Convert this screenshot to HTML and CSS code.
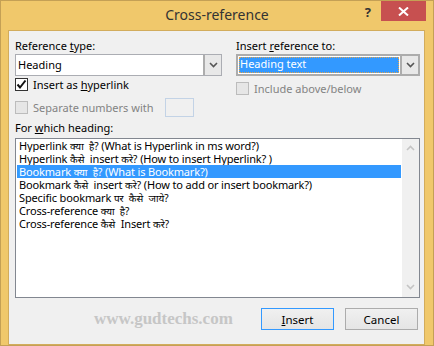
FILE: index.html
```html
<!DOCTYPE html>
<html lang="en">
<head>
    <meta charset="UTF-8">
    <title>Cross-reference</title>
    <link rel="stylesheet" href="styles.css">
</head>
<body>

    <div class="window">
        <div class="titlebar">
            <span></span>
            <span class="title">Cross-reference</span>
            <div class="controls">
                <span class="help">?</span>
                <span class="close">
                    <svg width="11" height="9" viewBox="0 0 11 9"><path d="M1 0.5 L10 8.5 M10 0.5 L1 8.5" stroke="#fff" stroke-width="2"/></svg>
                </span>
            </div>
        </div>

        <div class="client">
            <div class="top">
                <div class="col">
                    <div class="label">Reference <u>t</u>ype:</div>
                    <div class="combo">
                        <span class="value">Heading</span>
                        <span class="drop"><svg width="9" height="6" viewBox="0 0 9 6"><path d="M1 1 L4.5 4.5 L8 1" fill="none" stroke="#555" stroke-width="1.6"/></svg></span>
                    </div>
                    <div class="check">
                        <span class="box"><svg width="11" height="11" viewBox="0 0 11 11"><path d="M1.5 5.5 L4 8.5 L9.5 1.5" fill="none" stroke="#111" stroke-width="2"/></svg></span>
                        <span>Insert as <u>h</u>yperlink</span>
                    </div>
                    <div class="check disabled sep">
                        <span class="box"></span>
                        <span>Separate numbers with</span>
                        <span class="sep-box"></span>
                    </div>
                </div>
                <div class="col">
                    <div class="label">Insert <u>r</u>eference to:</div>
                    <div class="combo focused">
                        <span class="value">Heading text</span>
                        <span class="drop"><svg width="9" height="6" viewBox="0 0 9 6"><path d="M1 1 L4.5 4.5 L8 1" fill="none" stroke="#555" stroke-width="1.6"/></svg></span>
                    </div>
                    <div class="check disabled include">
                        <span class="box"></span>
                        <span>Include above/below</span>
                    </div>
                </div>
            </div>

            <div class="label">For <u>w</u>hich heading:</div>
            <div class="list">
                <ul>
                    <li>Hyperlink <span class="hi">क्या  है?</span> (What is Hyperlink in ms word?)</li>
                    <li>Hyperlink <span class="hi">कैसे</span>  insert <span class="hi">करे?</span> (How to insert Hyperlink? )</li>
                    <li class="selected">Bookmark <span class="hi">क्या  है?</span> (What is Bookmark?)</li>
                    <li>Bookmark <span class="hi">कैसे</span>  insert <span class="hi">करे?</span> (How to add or insert bookmark?)</li>
                    <li>Specific bookmark <span class="hi">पर  कैसे  जाये?</span></li>
                    <li>Cross-reference <span class="hi">क्या  है?</span></li>
                    <li>Cross-reference <span class="hi">कैसे</span>  Insert <span class="hi">करे?</span></li>
                </ul>
                <div class="scrollbar">
                    <svg width="9" height="6" viewBox="0 0 9 6"><path d="M1 5 L4.5 1.5 L8 5" fill="none" stroke="#c4c4c4" stroke-width="1.6"/></svg>
                    <svg width="9" height="6" viewBox="0 0 9 6"><path d="M1 1 L4.5 4.5 L8 1" fill="none" stroke="#c4c4c4" stroke-width="1.6"/></svg>
                </div>
            </div>

            <div class="footer">
                <span class="watermark">www.gudtechs.com</span>
                <button class="btn default"><u>I</u>nsert</button>
                <button class="btn">Cancel</button>
            </div>
        </div>
    </div>

</body>
</html>
```

FILE: styles.css
```css
body {
    margin: 0;
    padding: 0;
    background-color: #4b6a8c;
    font-family: "Noto Sans", sans-serif;
    font-size: 11px;
    color: #000;
}

.window {
    width: 432px;
    height: 344px;
    border: 1px solid #c4a055;
    background-color: #f0c86b;
}

.titlebar {
    height: 29px;
    display: grid;
    grid-template-columns: 1fr auto 1fr;
}

.title {
    font-size: 14px;
    line-height: 28px;
    color: #333;
}

.controls {
    display: flex;
    justify-content: flex-end;
    align-items: flex-start;
}

.help {
    font-weight: bold;
    font-size: 13px;
    line-height: 22px;
    color: #333;
    margin-right: 10px;
}

.close {
    width: 45px;
    height: 20px;
    margin-right: 7px;
    background-color: #c75050;
    display: flex;
    align-items: center;
    justify-content: center;
}

.client {
    margin: 0 8px 0 7px;
    height: 306px;
    border: 1px solid #d2ac5c;
    background-color: #f0f0f0;
    padding: 7px 4px 0 6px;
}

.label {
    line-height: 15px;
    height: 15px;
}

.top {
    display: grid;
    grid-template-columns: 207px 184px;
    column-gap: 14px;
}

.combo {
    margin-top: 1px;
    height: 22px;
    box-sizing: border-box;
    border: 1px solid #abadb3;
    background-color: #fff;
    display: flex;
}

.combo .value {
    flex: 1;
    padding-left: 2px;
    line-height: 20px;
}

.combo .drop {
    width: 18px;
    box-sizing: border-box;
    border-left: 2px solid #adadad;
    background-color: #e8e8e8;
    display: flex;
    align-items: center;
    justify-content: center;
}

.combo.focused {
    border: 2px solid #acacac;
}

.combo.focused .value {
    margin: 1px;
    padding-left: 1px;
    line-height: 14px;
    background-color: #3399ff;
    color: #fff;
    outline: 1px dotted #e3a34c;
    outline-offset: -1px;
}

.check {
    display: flex;
    align-items: center;
    height: 14px;
    margin-top: 1px;
}

.check .box {
    width: 13px;
    height: 13px;
    box-sizing: border-box;
    border: 1px solid #333;
    background-color: #fff;
    margin-right: 5px;
    display: flex;
    align-items: center;
    justify-content: center;
}

.check.disabled {
    color: #838383;
}

.check.disabled .box {
    border-color: #bcbcbc;
    background-color: #e6e6e6;
}

.check.sep {
    height: 19px;
    margin-top: 7px;
}

.check.include {
    margin-top: 5px;
}

.sep-box {
    width: 29px;
    height: 19px;
    box-sizing: border-box;
    border: 1px solid #c3d3e6;
    background-color: #f0f0f0;
    margin-left: 12px;
}

.top + .label {
    margin-top: 3px;
}

.list {
    margin-top: 3px;
    height: 160px;
    box-sizing: border-box;
    border: 1px solid #828790;
    background-color: #fff;
    display: flex;
}

.list ul {
    flex: 1;
    list-style: none;
    margin: 0;
    padding: 0 1px;
}

.list li {
    height: 13px;
    line-height: 13px;
    padding-left: 2px;
    white-space: pre;
    overflow: hidden;
    letter-spacing: -0.15px;
}

.list .hi {
    font-size: 10px;
    line-height: 10px;
    letter-spacing: 0;
}

.list li.selected {
    background-color: #3399ff;
    color: #fff;
}

.scrollbar {
    width: 17px;
    background-color: #f0f0f0;
    display: flex;
    flex-direction: column;
    justify-content: space-between;
    align-items: center;
    padding: 6px 0 7px;
}

.footer {
    margin-top: 10px;
    display: flex;
    align-items: center;
}

.watermark {
    font-family: "Liberation Serif", serif;
    font-weight: bold;
    font-size: 17px;
    color: #c6c6c6;
    margin-left: 79px;
}

.btn {
    width: 73px;
    height: 22px;
    border: 1px solid #acacac;
    background: linear-gradient(#f0f0f0, #e5e5e5);
    font-family: "Noto Sans", sans-serif;
    font-size: 11.5px;
    color: #000;
    padding: 0;
}

.btn.default {
    margin-left: auto;
    border-color: #3399ff;
}

.btn + .btn {
    margin-left: 11px;
    margin-right: 2px;
}
```
